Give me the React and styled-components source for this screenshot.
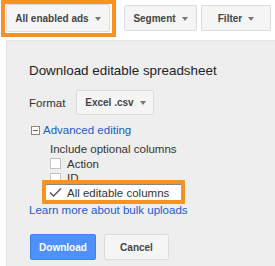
import React from 'react'
import styled, { createGlobalStyle } from 'styled-components'

const GlobalStyle = createGlobalStyle`
  html, body {
    margin: 0;
    padding: 0;
    background: #fff;
    font-family: "Liberation Sans", Arial, sans-serif;
  }
`

const Page = styled.div`
  width: 275px;
  height: 266px;
  overflow: hidden;
  display: flex;
  flex-direction: column;
`

const Toolbar = styled.div`
  display: flex;
  align-items: flex-start;
  height: 37px;
  flex-shrink: 0;
`

const Highlight = styled.div`
  margin-left: 1px;
  border: 4px solid #f7931e;
  padding: 0 2px 1px 1px;
  height: 28px;
  background: #fff;
`

const ToolButton = styled.div`
  display: flex;
  align-items: center;
  justify-content: center;
  gap: 6px;
  box-sizing: border-box;
  width: ${p => p.w}px;
  height: ${p => p.h || 27}px;
  margin-left: ${p => p.ml || 0}px;
  margin-top: ${p => p.mt || 0}px;
  background: #f5f5f5;
  border: 1px solid #dcdcdc;
  border-radius: 2px;
  color: #444;
  font-size: 10px;
  font-weight: bold;
`

const Caret = styled.span`
  width: 0;
  height: 0;
  border-left: 3.5px solid transparent;
  border-right: 3.5px solid transparent;
  border-top: 4px solid #777;
  margin-top: 1px;
`

const Panel = styled.div`
  flex: 1;
  margin: 3px 0 0 6px;
  background: #eeeeee;
  border-top: 1px solid #e4e4e4;
  border-left: 1px solid #e2e2e2;
  padding: 22px 0 0 22px;
  color: #222;
  font-size: 11.5px;
`

const Title = styled.div`
  font-size: 13.4px;
  line-height: 16px;
  color: #222;
`

const FormatRow = styled.div`
  display: flex;
  align-items: center;
  gap: 11px;
  margin-top: 11px;
  color: #333;
`

const Select = styled(ToolButton)`
  width: 78px;
  height: 25px;
`

const AdvancedRow = styled.div`
  display: flex;
  align-items: center;
  gap: 3px;
  margin-top: 8px;
  margin-left: 2px;
  line-height: 14px;
`

const MinusBox = styled.span`
  position: relative;
  box-sizing: border-box;
  width: 9px;
  height: 9px;
  border: 1px solid #888;
  background: #fff;
  &::after {
    content: '';
    position: absolute;
    left: 1px;
    right: 1px;
    top: 3px;
    height: 1px;
    background: #666;
  }
`

const Link = styled.span`
  color: #1a5ccc;
  line-height: 14px;
`

const Options = styled.div`
  margin-left: 21px;
  margin-top: 5px;
  color: #333;
`

const OptionRow = styled.div`
  position: relative;
  display: flex;
  align-items: center;
  gap: 6px;
  height: 14.5px;
`

const Box = styled.span`
  box-sizing: border-box;
  width: 11px;
  height: 11px;
  background: #fff;
  border: 1px solid ${p => (p.checked ? 'transparent' : '#c4c4c4')};
  display: flex;
  align-items: center;
  justify-content: center;
`

const Marker = styled.div`
  position: absolute;
  left: -8px;
  top: -6px;
  width: 143px;
  height: 24px;
  box-sizing: border-box;
  border: 4px solid #f7931e;
  border-radius: 1px;
  &::after {
    content: '';
    position: absolute;
    inset: 0;
    background: #fff;
    border-top: 1px solid #888;
  }
`

const OptionLabel = styled.span`
  position: relative;
  z-index: 1;
  display: flex;
  align-items: center;
  gap: 6px;
`

const LearnMore = styled(Link)`
  display: block;
  margin-top: 3px;
`

const Actions = styled.div`
  display: flex;
  gap: 8px;
  margin-top: 17px;
  margin-left: 1px;
`

const Button = styled.div`
  box-sizing: border-box;
  display: flex;
  align-items: center;
  justify-content: center;
  width: ${p => p.w}px;
  height: 26px;
  border-radius: 2px;
  font-size: 10px;
  font-weight: bold;
  background: ${p => (p.primary ? '#4d90fe' : '#f5f5f5')};
  border: 1px solid ${p => (p.primary ? '#3d82f0' : '#dcdcdc')};
  color: ${p => (p.primary ? '#fff' : '#444')};
`

const Check = () => (
  <svg width="13" height="11" viewBox="0 0 13 11" style={{ flexShrink: 0 }}>
    <path d="M1 5.5 L4.5 9 L12 1.5" fill="none" stroke="#555" strokeWidth="1.4" />
  </svg>
)

export default function App () {
  return (
    <Page>
      <GlobalStyle />
      <Toolbar>
        <Highlight>
          <ToolButton w={104} h={28}>All enabled ads <Caret /></ToolButton>
        </Highlight>
        <ToolButton w={73} h={26} ml={8} mt={5}>Segment <Caret /></ToolButton>
        <ToolButton w={70} h={26} ml={4} mt={5}>Filter <Caret /></ToolButton>
      </Toolbar>
      <Panel>
        <Title>Download editable spreadsheet</Title>
        <FormatRow>
          Format
          <Select as="div">Excel .csv <Caret /></Select>
        </FormatRow>
        <AdvancedRow>
          <MinusBox />
          <Link>Advanced editing</Link>
        </AdvancedRow>
        <Options>
          <OptionRow>Include optional columns</OptionRow>
          <OptionRow><Box />Action</OptionRow>
          <OptionRow><Box />ID</OptionRow>
          <OptionRow>
            <Marker />
            <OptionLabel><Box checked><Check /></Box>All editable columns</OptionLabel>
          </OptionRow>
        </Options>
        <LearnMore>Learn more about bulk uploads</LearnMore>
        <Actions>
          <Button primary w={66}>Download</Button>
          <Button w={65}>Cancel</Button>
        </Actions>
      </Panel>
    </Page>
  )
}
